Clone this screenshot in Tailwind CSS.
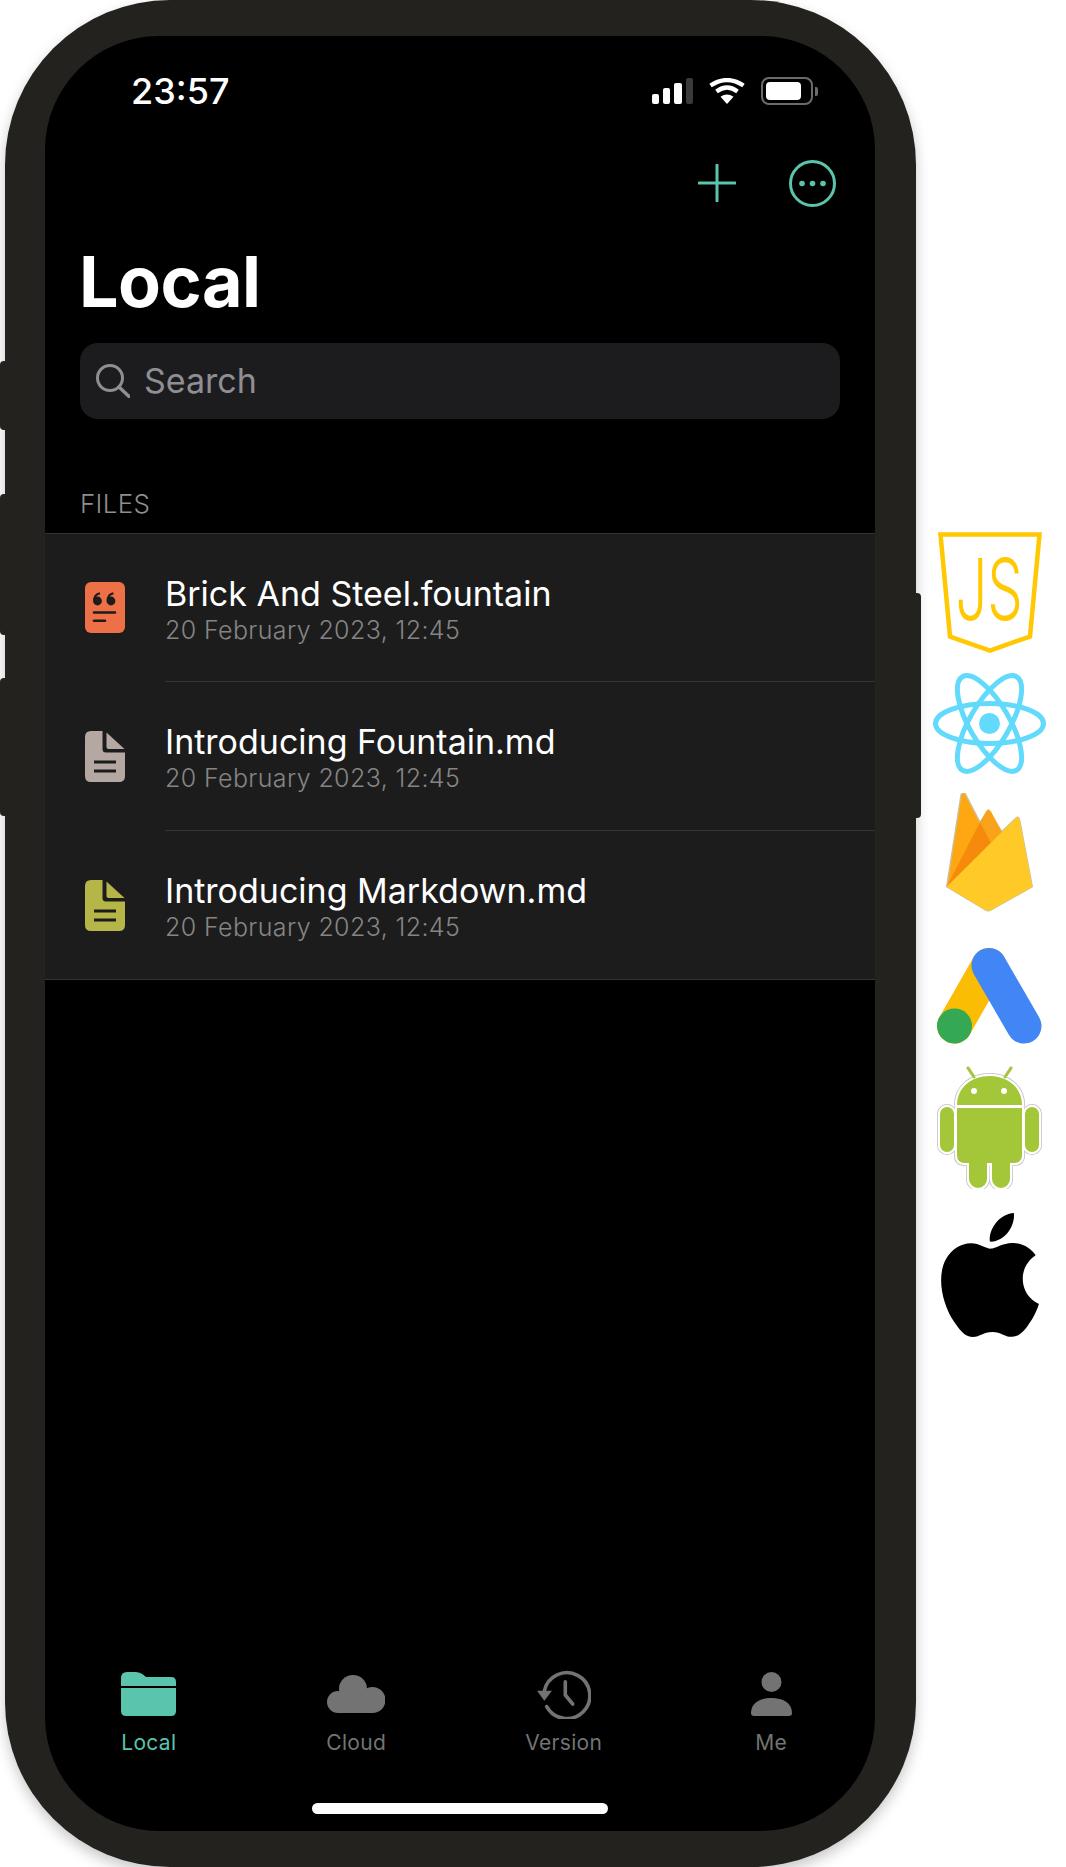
<!DOCTYPE html>
<html lang="en">
<head>
  <meta charset="UTF-8" />
  <meta name="viewport" content="width=device-width, initial-scale=1.0" />
  <title>Local</title>
  <script src="https://cdn.jsdelivr.net/npm/@tailwindcss/browser@4"></script>
</head>
<body class="bg-white font-['Inter',sans-serif] h-[1867px] w-[1066px] overflow-hidden">
  <div class="flex items-start pl-[5px]">

    <!-- phone -->
    <div class="relative w-[911px] h-[1867px] shrink-0 bg-[#23221e] rounded-[165px] pt-[36px] pb-[36px] pl-[40px] pr-[41px] shadow-[0_6px_14px_rgba(0,0,0,0.22)]">
      <!-- side buttons -->
      <div class="absolute left-[-5px] top-[361px] w-[5px] h-[69px] bg-[#23221e] rounded-l-[4px]"></div>
      <div class="absolute left-[-5px] top-[494px] w-[5px] h-[141px] bg-[#23221e] rounded-l-[4px]"></div>
      <div class="absolute left-[-5px] top-[678px] w-[5px] h-[138px] bg-[#23221e] rounded-l-[4px]"></div>
      <div class="absolute right-[-5px] top-[593px] w-[5px] h-[225px] bg-[#23221e] rounded-r-[4px]"></div>

      <!-- screen -->
      <div class="relative h-full bg-black rounded-[114px] overflow-hidden flex flex-col">

        <!-- status bar -->
        <div class="flex items-center justify-between h-[28px] mt-[41px] pl-[86px] pr-[57px]">
          <span class="text-white text-[36px] leading-[28px] font-medium">23:57</span>
          <div class="flex items-center">
            <div class="flex items-end gap-[4px] h-[26px]">
              <div class="w-[7px] h-[10px] bg-white rounded-[2px]"></div>
              <div class="w-[7px] h-[16px] bg-white rounded-[2px]"></div>
              <div class="w-[8px] h-[21px] bg-white rounded-[2px]"></div>
              <div class="w-[7px] h-[26px] bg-[#3a3a3a] rounded-[2px]"></div>
            </div>
            <svg class="ml-[16px]" width="36" height="26" viewBox="0 0 36 26">
              <path d="M18 26 L11.5 18.8 Q18 14 24.5 18.8 Z" fill="#fff"/>
              <path d="M7.5 13.5 Q18 5.5 28.5 13.5" fill="none" stroke="#fff" stroke-width="4.2"/>
              <path d="M1.5 7.5 Q18 -3.5 34.5 7.5" fill="none" stroke="#fff" stroke-width="4.2"/>
            </svg>
            <div class="ml-[16px] w-[52px] h-[28px] border-2 border-[#6b6b6b] rounded-[8px] p-[3px] pr-[10px]">
              <div class="h-full bg-white rounded-[4px]"></div>
            </div>
            <div class="ml-[2px] w-[3px] h-[9px] bg-[#6b6b6b] rounded-r-[2px]"></div>
          </div>
        </div>

        <!-- nav actions -->
        <div class="flex items-center justify-end h-[46px] mt-[55px] pr-[39px] gap-[53px]">
          <svg width="38" height="38" viewBox="0 0 38 38"><path d="M19 1V37M1 19H37" stroke="#5bc4ac" stroke-width="3" stroke-linecap="round" fill="none"/></svg>
          <svg width="47" height="47" viewBox="0 0 47 47">
            <circle cx="23.5" cy="23.5" r="22" fill="none" stroke="#5bc4ac" stroke-width="3"/>
            <circle cx="13" cy="23.5" r="2.8" fill="#5bc4ac"/><circle cx="23.5" cy="23.5" r="2.8" fill="#5bc4ac"/><circle cx="34" cy="23.5" r="2.8" fill="#5bc4ac"/>
          </svg>
        </div>

        <h1 class="self-start text-white text-[70px] leading-[70px] font-bold mt-[41px] ml-[34px] tracking-[-0.5px]">Local</h1>

        <!-- search -->
        <div class="flex items-center h-[76px] w-[760px] ml-[35px] mt-[26px] bg-[#1c1c1e] rounded-[18px] pl-[16px]">
          <svg width="34" height="34" viewBox="0 0 34 34" fill="none" stroke="#8e8e93" stroke-width="3">
            <circle cx="14" cy="14" r="12.5"/><path d="M23 23L33 32.5" stroke-linecap="round" stroke-width="3.4"/>
          </svg>
          <span class="ml-[14px] text-[34px] text-[#8e8e93] leading-none">Search</span>
        </div>

        <div class="self-start mt-[70px] ml-[35px] text-[26px] leading-[30px] tracking-[0.3px] text-[#8e8e8e] font-light">FILES</div>

        <!-- file list -->
        <div class="mt-[14px] bg-[#1c1c1c] border-y border-[#333333]">
          <div class="flex items-center h-[147px] pl-[40px]">
            <svg class="shrink-0" width="40" height="51" viewBox="0 0 40 51">
              <rect width="40" height="51" rx="6" fill="#ee7046"/>
              <g fill="#1c1c1c"><circle cx="12.5" cy="19" r="4.4"/><circle cx="26" cy="19" r="4.4"/></g>
              <g fill="none" stroke="#1c1c1c" stroke-width="2.2"><path d="M9.2 18.5C9.2 14.5 11.5 12 15 11.2"/><path d="M22.7 18.5C22.7 14.5 25 12 28.5 11.2"/></g>
              <path d="M9 30.5H30M9 38.7H20" stroke="#1c1c1c" stroke-width="2.6" stroke-linecap="round"/>
            </svg>
            <div class="ml-[40px] flex-1 pt-[3px]">
              <div class="text-white text-[34px] leading-[38px]">Brick And Steel.fountain</div>
              <div class="mt-[3px] text-[#858585] text-[25px] leading-[28px] tracking-[0.38px] font-light">20 February 2023, 12:45</div>
            </div>
          </div>
          <div class="ml-[120px] h-px bg-[#333333]"></div>
          <div class="flex items-center h-[148px] pl-[40px]">
            <svg class="shrink-0" width="40" height="51" viewBox="0 0 40 51">
              <path d="M6 0H17.5V18Q17.5 21.5 21 21.5H40V45Q40 51 34 51H6Q0 51 0 45V6Q0 0 6 0Z" fill="#b5a8a2"/>
              <path d="M21.5 1.5L39.5 18H23.5Q21.5 18 21.5 16Z" fill="#b5a8a2"/>
              <path d="M9 31H31M9 40H31" stroke="#1c1c1c" stroke-width="3"/>
            </svg>
            <div class="ml-[40px] flex-1 pt-[3px]">
              <div class="text-white text-[34px] leading-[38px]">Introducing Fountain.md</div>
              <div class="mt-[3px] text-[#858585] text-[25px] leading-[28px] tracking-[0.38px] font-light">20 February 2023, 12:45</div>
            </div>
          </div>
          <div class="ml-[120px] h-px bg-[#333333]"></div>
          <div class="flex items-center h-[148px] pl-[40px]">
            <svg class="shrink-0" width="40" height="51" viewBox="0 0 40 51">
              <path d="M6 0H17.5V18Q17.5 21.5 21 21.5H40V45Q40 51 34 51H6Q0 51 0 45V6Q0 0 6 0Z" fill="#b5b548"/>
              <path d="M21.5 1.5L39.5 18H23.5Q21.5 18 21.5 16Z" fill="#b5b548"/>
              <path d="M9 31H31M9 40H31" stroke="#1c1c1c" stroke-width="3"/>
            </svg>
            <div class="ml-[40px] flex-1 pt-[3px]">
              <div class="text-white text-[34px] leading-[38px]">Introducing Markdown.md</div>
              <div class="mt-[3px] text-[#858585] text-[25px] leading-[28px] tracking-[0.38px] font-light">20 February 2023, 12:45</div>
            </div>
          </div>
        </div>

        <div class="flex-1"></div>

        <!-- tab bar -->
        <div class="grid grid-cols-4 text-[21px] leading-[24px] tracking-[0.3px] text-[#737373]">
          <div class="flex flex-col items-center">
            <div class="h-[52px] flex items-center justify-center">
              <svg width="55" height="44" viewBox="0 0 55 44" fill="#5bc4ac">
                <path d="M0 14V6Q0 0 6 0H15Q19 0 22 2.5L25 5H50Q55 5 55 10V14Z"/>
                <path d="M0 16H55V39Q55 44 50 44H5Q0 44 0 39Z"/>
              </svg>
            </div>
            <span class="mt-[11px] text-[#5bc4ac]">Local</span>
          </div>
          <div class="flex flex-col items-center">
            <div class="h-[52px] flex items-center justify-center">
              <svg width="58" height="38" viewBox="0 0 58 38" fill="#737373">
                <circle cx="26" cy="14" r="14"/><circle cx="45.5" cy="25" r="13"/><circle cx="11" cy="27" r="11"/><rect x="11" y="20" width="35" height="18"/>
              </svg>
            </div>
            <span class="mt-[11px]">Cloud</span>
          </div>
          <div class="flex flex-col items-center">
            <div class="h-[52px] flex items-center justify-center">
              <svg width="54" height="49" viewBox="0 0 54 49" fill="none" stroke="#737373" stroke-width="3.6">
                <path d="M7.3 21A23 23 0 1 1 9.7 36.7" stroke-linecap="round"/>
                <path d="M0 20.7H15L7.3 30.7Z" fill="#737373" stroke="none"/>
                <path d="M28.3 11.7V25L35.7 34" stroke-linecap="round"/>
              </svg>
            </div>
            <span class="mt-[11px]">Version</span>
          </div>
          <div class="flex flex-col items-center">
            <div class="h-[52px] flex items-center justify-center">
              <svg width="41" height="44" viewBox="0 0 41 44" fill="#737373">
                <circle cx="20.5" cy="10" r="10"/>
                <path d="M0 41C0 31 9 26 20.5 26S41 31 41 41Q41 44 38 44H3Q0 44 0 41Z"/>
              </svg>
            </div>
            <span class="mt-[11px]">Me</span>
          </div>
        </div>

        <div class="w-[296px] h-[11px] bg-white rounded-full mx-auto mt-[48px] mb-[17px]"></div>
      </div>
    </div>

    <!-- tech logos -->
    <div class="flex flex-col items-center w-[113px] ml-[17px] mt-[532px]">
      <svg width="104" height="121" viewBox="0 0 104 121">
        <path d="M2.5 2.5H101.5L92 104.5L52 118.5L12 104.5Z" fill="#fff" stroke="#ffc800" stroke-width="4.5"/>
        <text transform="translate(51 88) scale(0.66 1)" text-anchor="middle" font-family="Inter" font-weight="300" font-size="85" fill="#ffc800">JS</text>
      </svg>
      <svg class="mt-[20px]" width="113" height="101" viewBox="0 0 113 101" fill="none">
        <g stroke="#61dafb" stroke-width="5">
          <ellipse cx="56.5" cy="50.5" rx="54" ry="20"/>
          <ellipse cx="56.5" cy="50.5" rx="54" ry="20" transform="rotate(60 56.5 50.5)"/>
          <ellipse cx="56.5" cy="50.5" rx="54" ry="20" transform="rotate(120 56.5 50.5)"/>
        </g>
        <circle cx="56.5" cy="50.5" r="10.5" fill="#61dafb"/>
      </svg>
      <svg class="mt-[19px]" width="89" height="119" viewBox="0 0 89 119">
        <path d="M1.7 93.7L16 2Q18.3 -3 21 2L35 29.3L43.3 17L56.7 38.7L71 25Q73.3 23 74.5 26.5L87.3 93.7L46 117Q43.3 118.5 40.5 117Z" fill="#ffa712" stroke="#c9c09a" stroke-width="1.4"/>
        <path d="M35 29.3L41 18.5Q43.3 15 46 18.5L56.7 38.7L46 50.3Z" fill="#f9a31a"/>
        <path d="M1.7 93.7L35 29.3L46 50.3Z" fill="#f58a0d"/>
        <path d="M1.7 93.7L71 25Q73.3 23 74.5 26.5L87.3 93.7L46 117Q43.3 118.5 40.5 117Z" fill="#ffca28"/>
      </svg>
      <svg class="mt-[36px]" width="105" height="96" viewBox="0 0 105 96" fill="none">
        <path d="M52 17.5L17.5 78" stroke="#fbbc04" stroke-width="35" stroke-linecap="round"/>
        <path d="M52 17.5L87 78" stroke="#4285f4" stroke-width="35" stroke-linecap="round"/>
        <circle cx="17.5" cy="78" r="17.5" fill="#34a853"/>
      </svg>
      <svg class="mt-[21px]" width="105" height="124" viewBox="0 0 105 124">
        <defs>
          <g id="droid">
            <path d="M37 12L31 3M68 12L74 3" fill="none" stroke-linecap="round" stroke-width="3"/>
            <path d="M20 40C20 22 35 11 52.5 11S85 22 85 40Z"/>
            <path d="M20 43H85V90Q85 98 77 98H73V114A9 9 0 0 1 55 114V98H50V114A9 9 0 0 1 32 114V98H28Q20 98 20 90Z"/>
            <rect x="3" y="42" width="14" height="45" rx="7"/>
            <rect x="88" y="42" width="14" height="45" rx="7"/>
          </g>
        </defs>
        <use href="#droid" fill="#fff" stroke="#bdbdbd" stroke-width="6"/>
        <use href="#droid" fill="#fff" stroke="#fff" stroke-width="4.5"/>
        <path d="M37 12L31 3M68 12L74 3" fill="none" stroke="#a4c639" stroke-linecap="round" stroke-width="3"/>
        <path d="M20 40C20 22 35 11 52.5 11S85 22 85 40Z" fill="#a4c639"/>
        <path d="M20 43H85V90Q85 98 77 98H73V114A9 9 0 0 1 55 114V98H50V114A9 9 0 0 1 32 114V98H28Q20 98 20 90Z" fill="#a4c639"/>
        <rect x="3" y="42" width="14" height="45" rx="7" fill="#a4c639"/>
        <rect x="88" y="42" width="14" height="45" rx="7" fill="#a4c639"/>
        <circle cx="37" cy="26" r="3" fill="#fff"/><circle cx="67" cy="26" r="3" fill="#fff"/>
      </svg>
      <svg class="mt-[24px]" width="100" height="124" viewBox="2 0 20 24" preserveAspectRatio="none">
        <path d="M12.152 6.896c-.948 0-2.415-1.078-3.96-1.04-2.04.027-3.91 1.183-4.961 3.014-2.117 3.675-.546 9.103 1.519 12.09 1.013 1.454 2.208 3.09 3.792 3.039 1.52-.065 2.09-.987 3.935-.987 1.831 0 2.35.987 3.96.948 1.637-.026 2.676-1.48 3.676-2.948 1.156-1.688 1.636-3.325 1.662-3.415-.039-.013-3.182-1.221-3.22-4.857-.026-3.04 2.48-4.494 2.597-4.559-1.429-2.09-3.623-2.324-4.39-2.376-2-.156-3.675 1.09-4.61 1.09zM15.53 3.83c.843-1.012 1.4-2.427 1.245-3.83-1.207.052-2.662.805-3.532 1.818-.78.896-1.454 2.338-1.273 3.714 1.338.104 2.715-.688 3.559-1.701" fill="#000"/>
      </svg>
    </div>
  </div>
</body>
</html>
